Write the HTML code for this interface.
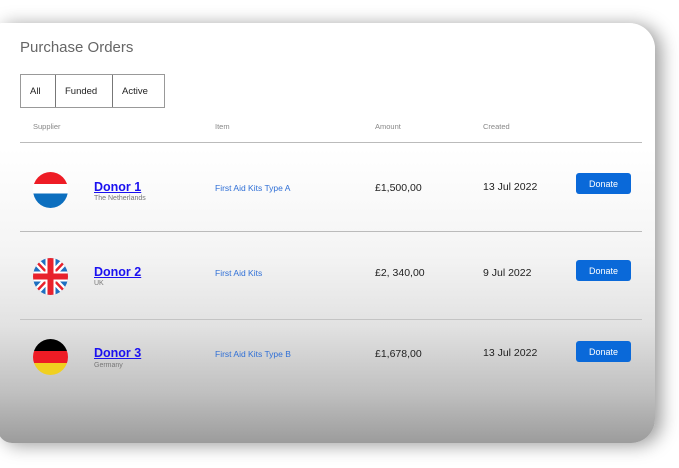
<!DOCTYPE html><html><head><style>
body{margin:0;width:679px;height:468px;background:#fff;position:relative;overflow:hidden;font-family:"Liberation Sans",sans-serif}
.card{position:absolute;left:-2px;top:23px;width:657px;height:420px;border-radius:4px 26px 24px 14px;background:linear-gradient(#fff 0%,#fff 30%,#f4f4f4 55%,#e2e2e2 72%,#c0c0c0 88%,#9c9c9c 100%);box-shadow:6px 2px 18px rgba(0,0,0,.4)}
.a{position:absolute}
.t{left:20px;top:39px;font-size:15px;color:#666}
.tabs{left:20px;top:74px;width:145px;height:34px;border:1px solid #999;box-sizing:border-box;display:flex;font-size:9.5px;color:#222}
.tabs div{display:flex;align-items:center;padding:0 9px;border-right:1px solid #777}
.tabs div:last-child{border:0}
.h{top:122px;font-size:7.5px;color:#888}
.ln{left:20px;width:622px;height:1px;background:#bbb}
.flag{left:33px;width:35px;height:36px;border-radius:50%;overflow:hidden}
.nm{left:94px;font-size:12.5px;font-weight:bold;color:#1a10f0;text-decoration:underline;-webkit-text-stroke:0;font-weight:600}
.sub{left:94px;font-size:7px;color:#777}
.it{left:215px;font-size:8.5px;color:#2f6fd6}
.am{left:375px;font-size:10.5px;color:#222}
.dt{left:483px;font-size:10.5px;color:#222}
.btn{left:576px;width:55px;height:21px;background:#0a69d9;border-radius:3px;color:#fff;font-size:9px;display:flex;align-items:center;justify-content:center}
</style></head><body>
<div class="card"></div>
<div class="a t">Purchase Orders</div>
<div class="a tabs"><div style="width:16px">All</div><div style="width:38px">Funded</div><div>Active</div></div>
<div class="a h" style="left:33px">Supplier</div>
<div class="a h" style="left:215px">Item</div>
<div class="a h" style="left:375px">Amount</div>
<div class="a h" style="left:483px">Created</div>
<div class="a ln" style="top:142px"></div>
<div class="a ln" style="top:231px"></div>
<div class="a ln" style="top:319px;background:#c4c4c4"></div>

<div class="a flag" style="top:172px;background:linear-gradient(#ee1c25 0 33%,#fff 33% 60%,#0d6fbf 60%)"></div>
<div class="a nm" style="top:180px">Donor 1</div>
<div class="a sub" style="top:195px">The Netherlands</div>
<div class="a it" style="top:183px">First Aid Kits Type A</div>
<div class="a am" style="top:182px">£1,500,00</div>
<div class="a dt" style="top:181px">13 Jul 2022</div>
<div class="a btn" style="top:173px">Donate</div>

<div class="a flag" style="top:258px;height:37px"><svg width="35" height="37" viewBox="0 0 35 37"><rect width="35" height="37" fill="#1f6fc0"/><path d="M0 0L35 37M35 0L0 37" stroke="#fff" stroke-width="7"/><path d="M0 0L35 37M35 0L0 37" stroke="#e8222c" stroke-width="2.5"/><path d="M17.5 0V37M0 18.5H35" stroke="#fff" stroke-width="10"/><path d="M17.5 0V37M0 18.5H35" stroke="#e8222c" stroke-width="6"/></svg></div>
<div class="a nm" style="top:265px">Donor 2</div>
<div class="a sub" style="top:280px">UK</div>
<div class="a it" style="top:268px">First Aid Kits</div>
<div class="a am" style="top:267px">£2, 340,00</div>
<div class="a dt" style="top:267px">9 Jul 2022</div>
<div class="a btn" style="top:260px">Donate</div>

<div class="a flag" style="top:339px;background:linear-gradient(#000 0 33%,#ee1c25 33% 66%,#f0d020 66%)"></div>
<div class="a nm" style="top:346px">Donor 3</div>
<div class="a sub" style="top:362px">Germany</div>
<div class="a it" style="top:349px">First Aid Kits Type B</div>
<div class="a am" style="top:348px">£1,678,00</div>
<div class="a dt" style="top:347px">13 Jul 2022</div>
<div class="a btn" style="top:341px">Donate</div>
</body></html>
